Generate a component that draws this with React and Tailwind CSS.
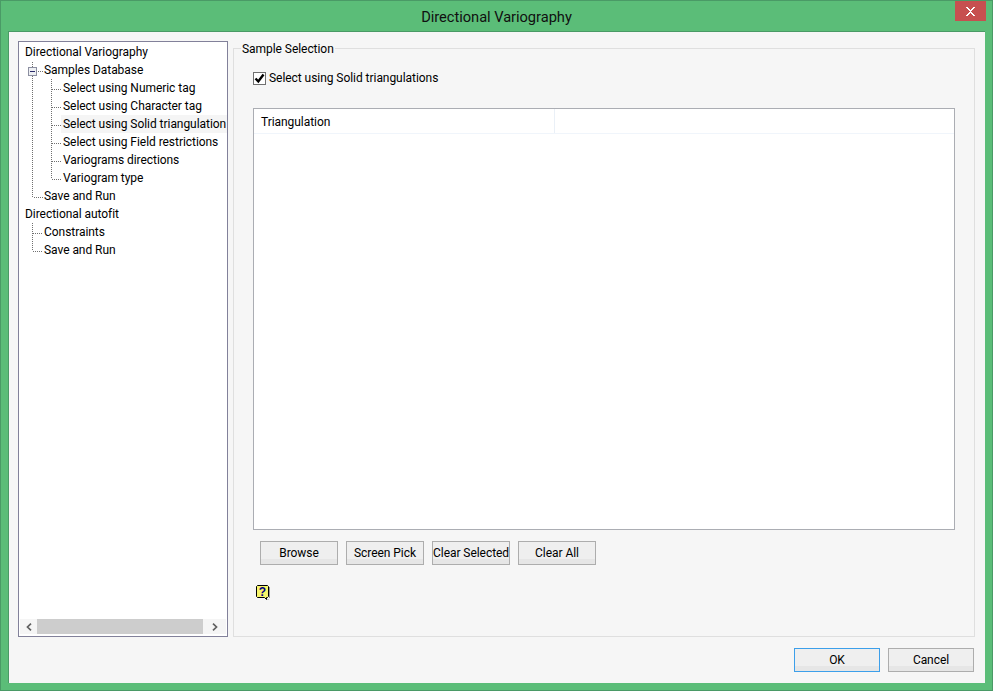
import React from "react";

const font = { fontFamily: 'Roboto, "Noto Sans", sans-serif', letterSpacing: "-0.05px" };

const rows = [
  ["Directional Variography", 0],
  ["Samples Database", 1],
  ["Select using Numeric tag", 2],
  ["Select using Character tag", 2],
  ["Select using Solid triangulation", 2, true],
  ["Select using Field restrictions", 2],
  ["Variograms directions", 2],
  ["Variogram type", 2],
  ["Save and Run", 1],
  ["Directional autofit", 0],
  ["Constraints", 1],
  ["Save and Run", 1],
];

function TreeLines() {
  return (
    <svg className="absolute left-0 top-0" width="90" height="230" fill="none" shapeRendering="crispEdges">
      <g stroke="#707070" strokeDasharray="1 1">
        <path d="M13.5 20V155H24" />
        <path d="M32.5 37V137H43" />
        <path d="M32.5 47H43M32.5 65H43M32.5 83H43M32.5 101H43M32.5 119H43" />
        <path d="M19 29H24" />
        <path d="M13.5 181V209H24M13.5 191H24" />
      </g>
      <rect x="9.500" y="25.500" width="8" height="8" fill="#eef0f3" stroke="#8c8fa1" />
      <path d="M11 29.500H16" stroke="#2b2b6b" />
    </svg>
  );
}

function Btn({ children, className = "", blue }) {
  return (
    <button
      className={`relative h-6 border ${blue ? "border-[#3c9fea]" : "border-[#adadad]"} bg-[#efefef] text-[12px] leading-none text-black ${className}`}
    >
      <span className="absolute inset-x-0 bottom-0 h-[5px] bg-[#e6e6e6]" />
      <span className="relative whitespace-nowrap">{children}</span>
    </button>
  );
}

export default function App() {
  return (
    <div
      style={font}
      className="flex h-[691px] w-[993px] flex-col border border-[#4a9a66] bg-[#5bbd78] text-[12px] text-black"
    >
      <div className="relative flex h-[30px] shrink-0 items-center justify-center text-[14.7px] text-[#101010]">
        <span className="relative top-[1px]">Directional Variography</span>
        <div className="absolute right-[6px] top-0 flex h-[20px] w-[31px] items-center justify-center bg-[#c75050]">
          <svg width="9" height="9" viewBox="0 0 9 9" shapeRendering="crispEdges" fill="#fff">
            <path d="M0 0h2v1h1v1h1v1h1V2h1V1h1V0h2v1H8v1H7v1H6v1H5v1h1v1h1v1h1v1h1v1H7V8H6V7H5V6H4v1H3v1H2v1H0V8h1V7h1V6h1V5h1V4H3V3H2V2H1V1H0z" />
          </svg>
        </div>
      </div>

      <div className="mx-[7px] mb-[7px] flex min-h-0 flex-1 flex-col border-l border-t border-[#4a9a66] bg-[#f6f6f6]">
        <div className="flex min-h-0 flex-1 pl-[9px] pr-[9px] pt-[9px]">
          {/* Tree */}
          <div className="relative flex h-[596px] w-[210px] shrink-0 flex-col border border-[#82819a] bg-white">
            <div className="relative flex-1 pt-[1px]">
              <TreeLines />
              {rows.map(([t, lvl, sel], i) => (
                <div
                  key={i}
                  className={`relative flex h-[18px] items-center whitespace-nowrap leading-[18px] ${
                    lvl === 0 ? "pl-[6px]" : lvl === 1 ? "pl-[25px]" : "pl-[44px]"
                  }`}
                >
                  {sel && <span className="absolute inset-y-0 left-[42px] right-0 bg-[#f5f5f5]" />}
                  <span className="relative">{t}</span>
                </div>
              ))}
            </div>
            <div className="mx-px mb-[2px] flex h-[15px] items-center bg-[#f5f5f5]">
              <div className="flex h-full w-[17px] items-center justify-center">
                <svg width="6" height="8" viewBox="0 0 6 8" fill="none" stroke="#606060" strokeWidth="1.7">
                  <path d="M5 .7 1.500 4 5 7.300" />
                </svg>
              </div>
              <div className="h-full flex-1 bg-[#cdcdcd]" />
              <div className="flex h-full w-[23px] items-center justify-center">
                <svg width="6" height="8" viewBox="0 0 6 8" fill="none" stroke="#606060" strokeWidth="1.7">
                  <path d="M1 .7 4.500 4 1 7.300" />
                </svg>
              </div>
            </div>
          </div>

          {/* Group */}
          <div className="relative ml-[5px] mt-[7px] flex h-[589px] w-[742px] flex-col border border-[#dfdfdf] px-[19px]">
            <div className="absolute left-[7px] top-[-9px] bg-[#f6f6f6] px-px leading-[18px]">Sample Selection</div>
            <label className="mt-[20px] flex h-[18px] items-center">
              <span className="flex h-[13px] w-[13px] items-center justify-center border border-[#707070] bg-white">
                <svg width="11" height="11" viewBox="0 0 11 11" fill="none" stroke="#000" strokeWidth="2.4">
                  <path d="M1.500 5.500 4.300 8.500 9.500 1.500" />
                </svg>
              </span>
              <span className="ml-[3px] leading-[18px]">Select using Solid triangulations</span>
            </label>
            <div className="mt-[21px] h-[422px] w-[702px] border border-[#abadb3] bg-white">
              <div className="flex h-[25px] border-b border-[#f0f5fb]">
                <div className="flex w-[301px] items-center border-r border-[#eaf0f7] pl-[7px] pt-[2px]">Triangulation</div>
              </div>
            </div>
            <div className="ml-[7px] mt-[11px] flex gap-2">
              <Btn className="w-[78px]">Browse</Btn>
              <Btn className="w-[78px]">Screen Pick</Btn>
              <Btn className="w-[78px]">Clear Selected</Btn>
              <Btn className="w-[78px]">Clear All</Btn>
            </div>
            <div className="ml-[2px] mt-[19px]">
              <svg width="16" height="18" viewBox="0 0 16 18">
                <path d="M2.500 1.500H12.500L13.500 2.500V12.500L12.500 13.500H11.500V15.500L9.500 13.500H2.500L1.500 12.500V2.500Z" fill="#f8f66c" stroke="#000" />
                <path d="M14.500 3V14M12.500 15.500H13.500" stroke="#9a9a9a" fill="none" />
                <text x="7.500" y="12" textAnchor="middle" fontSize="12" fontWeight="700" fill="#000080" fontFamily="Liberation Sans, sans-serif">?</text>
              </svg>
            </div>
          </div>
        </div>

        <div className="flex h-[46px] shrink-0 justify-end gap-2 pr-[11px] pt-[11px]">
          <Btn blue className="w-[86px]">OK</Btn>
          <Btn className="w-[86px]">Cancel</Btn>
        </div>
      </div>
    </div>
  );
}
